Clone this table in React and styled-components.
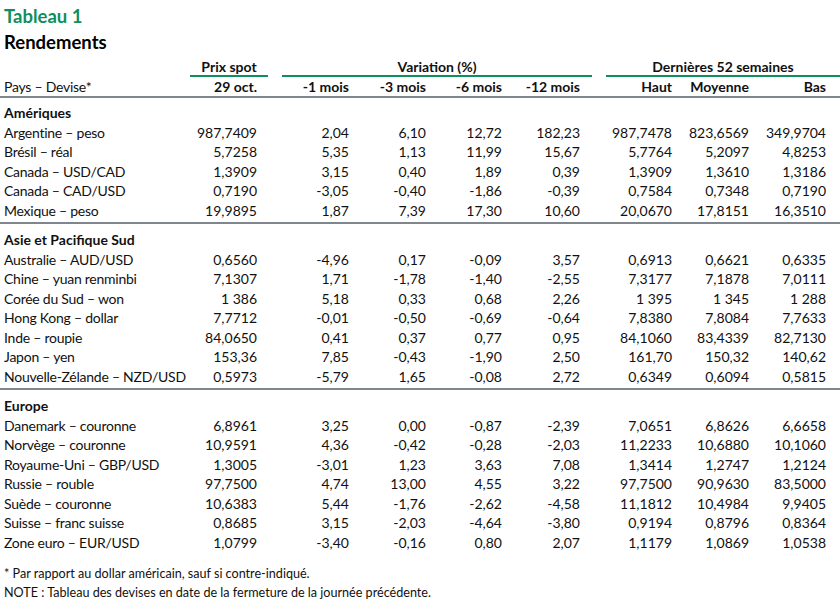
import React from "react";
import styled, { createGlobalStyle } from "styled-components";

const GlobalStyle = createGlobalStyle`
  body {
    margin: 0;
    background: #fff;
    font-family: Lato, "Open Sans", sans-serif;
    color: #111;
  }
`;

const COLS = "186px 78px 14px 77px 77px 76px 80px 14px 76px 77px 81px";

// grid column + right padding for each value column
const valueCols = [
  { col: 2, pad: 11 },
  { col: 4, pad: 10 },
  { col: 5, pad: 10 },
  { col: 6, pad: 10 },
  { col: 7, pad: 12 },
  { col: 9, pad: 10 },
  { col: 10, pad: 10 },
  { col: 11, pad: 14 },
];

const sections = [
  {
    title: "Amériques",
    rows: [
      ["Argentine – peso", "987,7409", "2,04", "6,10", "12,72", "182,23", "987,7478", "823,6569", "349,9704"],
      ["Brésil – réal", "5,7258", "5,35", "1,13", "11,99", "15,67", "5,7764", "5,2097", "4,8253"],
      ["Canada – USD/CAD", "1,3909", "3,15", "0,40", "1,89", "0,39", "1,3909", "1,3610", "1,3186"],
      ["Canada – CAD/USD", "0,7190", "-3,05", "-0,40", "-1,86", "-0,39", "0,7584", "0,7348", "0,7190"],
      ["Mexique – peso", "19,9895", "1,87", "7,39", "17,30", "10,60", "20,0670", "17,8151", "16,3510"],
    ],
  },
  {
    title: "Asie et Pacifique Sud",
    rows: [
      ["Australie – AUD/USD", "0,6560", "-4,96", "0,17", "-0,09", "3,57", "0,6913", "0,6621", "0,6335"],
      ["Chine – yuan renminbi", "7,1307", "1,71", "-1,78", "-1,40", "-2,55", "7,3177", "7,1878", "7,0111"],
      ["Corée du Sud – won", "1\u202f386", "5,18", "0,33", "0,68", "2,26", "1\u202f395", "1\u202f345", "1\u202f288"],
      ["Hong Kong – dollar", "7,7712", "-0,01", "-0,50", "-0,69", "-0,64", "7,8380", "7,8084", "7,7633"],
      ["Inde – roupie", "84,0650", "0,41", "0,37", "0,77", "0,95", "84,1060", "83,4339", "82,7130"],
      ["Japon – yen", "153,36", "7,85", "-0,43", "-1,90", "2,50", "161,70", "150,32", "140,62"],
      ["Nouvelle-Zélande – NZD/USD", "0,5973", "-5,79", "1,65", "-0,08", "2,72", "0,6349", "0,6094", "0,5815"],
    ],
  },
  {
    title: "Europe",
    rows: [
      ["Danemark – couronne", "6,8961", "3,25", "0,00", "-0,87", "-2,39", "7,0651", "6,8626", "6,6658"],
      ["Norvège – couronne", "10,9591", "4,36", "-0,42", "-0,28", "-2,03", "11,2233", "10,6880", "10,1060"],
      ["Royaume-Uni – GBP/USD", "1,3005", "-3,01", "1,23", "3,63", "7,08", "1,3414", "1,2747", "1,2124"],
      ["Russie – rouble", "97,7500", "4,74", "13,00", "4,55", "3,22", "97,7500", "90,9630", "83,5000"],
      ["Suède – couronne", "10,6383", "5,44", "-1,76", "-2,62", "-4,58", "11,1812", "10,4984", "9,9405"],
      ["Suisse – franc suisse", "0,8685", "3,15", "-2,03", "-4,64", "-3,80", "0,9194", "0,8796", "0,8364"],
      ["Zone euro – EUR/USD", "1,0799", "-3,40", "-0,16", "0,80", "2,07", "1,1179", "1,0869", "1,0538"],
    ],
  },
];

const subHeads = ["29 oct.", "-1 mois", "-3 mois", "-6 mois", "-12 mois", "Haut", "Moyenne", "Bas"];

const Page = styled.div`
  width: 840px;
  padding-top: 4px;
  font-size: 14px;
`;

const Title = styled.h1`
  margin: 0;
  padding-left: 4px;
  font-size: 18.5px;
  line-height: 24px;
  font-weight: 700;
  color: ${(p) => (p.$accent ? "#0e8f5c" : "#000")};
  margin-top: ${(p) => (p.$accent ? "0" : "2px")};
`;

const Row = styled.div`
  display: grid;
  grid-template-columns: ${COLS};
  padding-left: 4px;
  height: ${(p) => p.$h || 19.5}px;
  align-items: center;
  border-bottom: ${(p) => (p.$rule ? "2px solid #80868e" : "none")};
`;

const GroupHead = styled.div`
  grid-column: ${(p) => p.$span};
  align-self: stretch;
  display: flex;
  align-items: center;
  justify-content: center;
  font-weight: 700;
  border-bottom: 2px solid #0e8f5c;
`;

const HeadCell = styled.div`
  grid-column: ${(p) => p.$col};
  text-align: right;
  padding-right: ${(p) => p.$pad}px;
  font-weight: 700;
  white-space: nowrap;
`;

const Label = styled.div`
  grid-column: 1;
  white-space: nowrap;
  letter-spacing: ${(p) => (p.$bold ? "0" : "-0.25px")};
  font-weight: ${(p) => (p.$bold ? 700 : 400)};
`;

const Value = styled.div`
  grid-column: ${(p) => p.$col};
  text-align: right;
  padding-right: ${(p) => p.$pad}px;
  white-space: nowrap;
`;

const Section = styled.div`
  padding-top: ${(p) => (p.$first ? 5 : 6)}px;
  padding-bottom: 2px;
  border-bottom: ${(p) => (p.$rule ? "2px solid #80868e" : "none")};
`;

const Notes = styled.div`
  margin-top: 10px;
  padding-left: 4px;
  font-size: 12.6px;
  line-height: 19px;
`;

export default function App() {
  return (
    <Page>
      <GlobalStyle />
      <Title $accent>Tableau 1</Title>
      <Title>Rendements</Title>

      <Row $h={20} style={{ marginTop: 3 }}>
        <GroupHead $span="2 / 3">Prix spot</GroupHead>
        <GroupHead $span="4 / 8">Variation (%)</GroupHead>
        <GroupHead $span="9 / 12">Dernières 52 semaines</GroupHead>
      </Row>
      <Row $h={19} $rule>
        <Label>Pays – Devise*</Label>
        {subHeads.map((h, i) => (
          <HeadCell key={h} $col={valueCols[i].col} $pad={valueCols[i].pad}>
            {h}
          </HeadCell>
        ))}
      </Row>

      {sections.map((s, si) => (
        <Section key={s.title} $first={si === 0} $rule={si < sections.length - 1}>
          <Row>
            <Label $bold>{s.title}</Label>
          </Row>
          {s.rows.map(([name, ...vals]) => (
            <Row key={name}>
              <Label>{name}</Label>
              {vals.map((v, i) => (
                <Value key={i} $col={valueCols[i].col} $pad={valueCols[i].pad}>
                  {v}
                </Value>
              ))}
            </Row>
          ))}
        </Section>
      ))}

      <Notes>
        <div>* Par rapport au dollar américain, sauf si contre-indiqué.</div>
        <div>NOTE : Tableau des devises en date de la fermeture de la journée précédente.</div>
      </Notes>
    </Page>
  );
}
